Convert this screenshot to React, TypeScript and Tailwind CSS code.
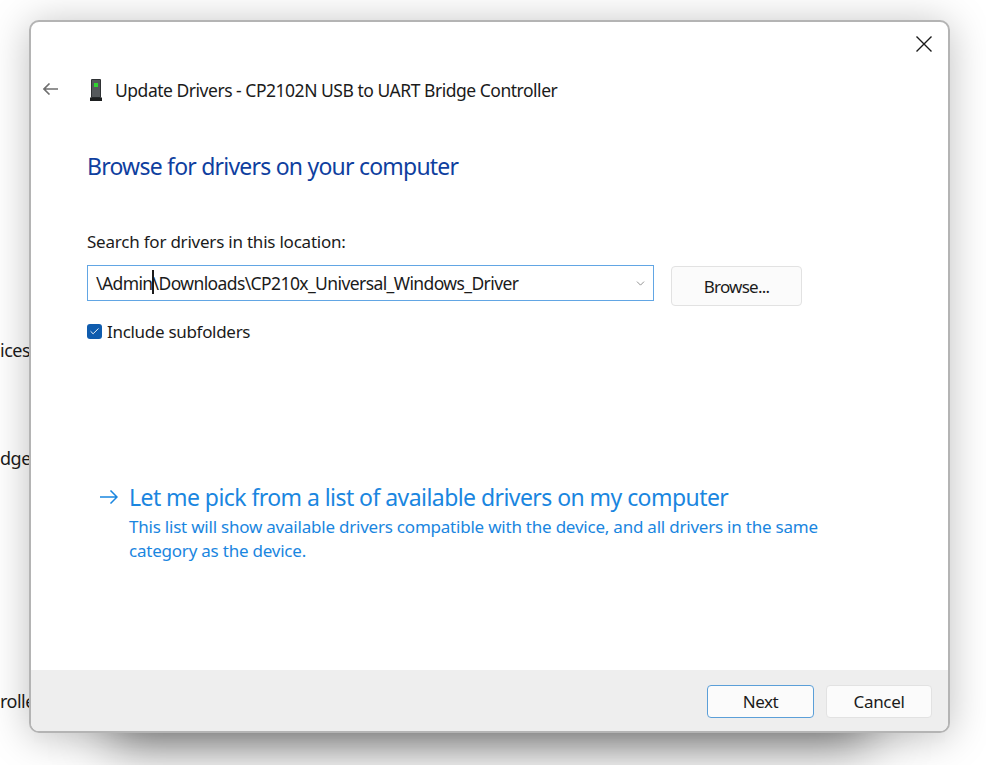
import { Check, ChevronDown } from "lucide-react";

const font = { fontFamily: '"Noto Sans", "Open Sans", sans-serif' };

function DeviceIcon() {
  return (
    <svg width="14" height="24" viewBox="0 0 14 24" className="shrink-0">
      <rect x="2" y="1" width="10" height="19" rx="1" fill="#2f3234" />
      <rect x="3" y="2" width="8" height="17" fill="#55595c" />
      <rect x="5" y="5" width="4" height="4" fill="#2fd62f" />
      <rect x="1" y="19.5" width="12" height="3.5" fill="#1d1f20" />
    </svg>
  );
}

function DialogButton({ label, focused, className }: { label: string; focused?: boolean; className: string }) {
  return (
    <button
      className={`flex items-center justify-center rounded-[4px] border bg-[#fbfbfb] text-[17px] text-[#1b1b1b] ${
        focused ? "border-[#5b9fd8]" : "border-[#e2e2e2]"
      } ${className}`}
    >
      {label}
    </button>
  );
}

export default function App() {
  return (
    <div className="relative h-[765px] w-[986px] overflow-hidden bg-white" style={font}>
      {/* Device manager peeking out behind the dialog */}
      <div className="absolute left-0 top-[339px] text-[18px] leading-[22px] tracking-[-0.5px] text-[#1b1b1b]">ices</div>
      <div className="absolute left-0 top-[447px] text-[18px] leading-[22px] tracking-[-0.5px] text-[#1b1b1b]">dge</div>
      <div className="absolute left-0 top-[690px] text-[18px] leading-[22px] tracking-[-0.5px] text-[#1b1b1b]">rolle</div>

      <div className="pl-[29px] pt-[20px]">
        <div className="relative flex h-[713px] w-[921px] flex-col overflow-hidden rounded-[10px] border-2 border-[#b4b4b4] bg-white shadow-[0_4px_40px_rgba(0,0,0,0.26),0_90px_50px_-80px_rgba(0,0,0,0.5)]">
          <button className="absolute right-[16px] top-[14px] text-[#1a1a1a]">
            <svg width="16" height="16" viewBox="0 0 16 16" fill="none" stroke="currentColor" strokeWidth="1.4">
              <path d="M0.5 0.5L15.5 15.5M15.5 0.5L0.5 15.5" />
            </svg>
          </button>

          <div className="flex flex-1 flex-col">
            <div className="mt-[56px] flex h-[24px] items-center pl-[12px]">
              <svg width="15" height="12" viewBox="0 0 15 12" fill="none" stroke="#6f6f6f" strokeWidth="1.6" className="-mt-[3px] shrink-0">
                <path d="M15 6H1M6.5 0.5L1 6l5.5 5.5" />
              </svg>
              <div className="ml-[31px]">
                <DeviceIcon />
              </div>
              <span className="ml-[12px] text-[17.5px] tracking-[-0.48px] text-[#1b1b1b]">
                Update Drivers - CP2102N USB to UART Bridge Controller
              </span>
            </div>

            <h1 className="ml-[56px] mt-[47px] text-[23px] leading-[34px] tracking-[-0.78px] text-[#0f3f9f]">
              Browse for drivers on your computer
            </h1>

            <p className="ml-[56px] mt-[47px] text-[17px] leading-[24px] tracking-[-0.22px] text-[#1b1b1b]">
              Search for drivers in this location:
            </p>

            <div className="ml-[56px] mt-[11px] flex items-start">
              <div className="relative flex h-[36px] w-[567px] items-center justify-between border border-[#62a6e4] pl-[8px] pr-[6px]">
                <span className="text-[17.5px] tracking-[-0.6px] text-[#1b1b1b]">
                  \Admin\Downloads\CP210x_Universal_Windows_Driver
                </span>
                <ChevronDown size={13} strokeWidth={1.5} className="text-[#7a7a7a]" />
                <span className="absolute left-[64px] top-[4px] h-[24px] w-[2px] bg-[#1b1b1b]" />
              </div>
              <DialogButton label="Browse..." className="ml-[17px] mt-[1px] h-[40px] w-[131px] pt-[2px] tracking-[-0.75px]" />
            </div>

            <label className="ml-[56px] mt-[13px] flex items-center text-[17px] tracking-[-0.3px] text-[#1b1b1b]">
              <span className="flex h-[15px] w-[15px] items-center justify-center rounded-[3px] bg-[#0f5cae]">
                <Check size={11} strokeWidth={2} className="text-white" />
              </span>
              <span className="ml-[5px]">Include subfolders</span>
            </label>

            <div className="ml-[69px] mt-[136px] flex items-start text-[#1a86e0]">
              <svg width="18" height="14" viewBox="0 0 18 14" fill="none" stroke="currentColor" strokeWidth="1.5" className="mt-[9px] shrink-0">
                <path d="M0 7H17M10.5 0.5L17 7l-6.5 6.5" />
              </svg>
              <div className="ml-[11px]">
                <p className="text-[23px] leading-[32px] tracking-[-0.56px]">
                  Let me pick from a list of available drivers on my computer
                </p>
                <p className="mt-[2px] w-[720px] text-[17px] leading-[24px] tracking-[-0.22px]">
                  This list will show available drivers compatible with the device, and all drivers in the same category as the device.
                </p>
              </div>
            </div>
          </div>

          <div className="flex h-[61px] items-start justify-end gap-[12px] bg-[#eeeeee] pr-[16px] pt-[15px]">
            <DialogButton label="Next" focused className="h-[33px] w-[107px] tracking-[-0.5px]" />
            <DialogButton label="Cancel" className="h-[33px] w-[106px] tracking-[-0.33px]" />
          </div>
        </div>
      </div>
    </div>
  );
}
